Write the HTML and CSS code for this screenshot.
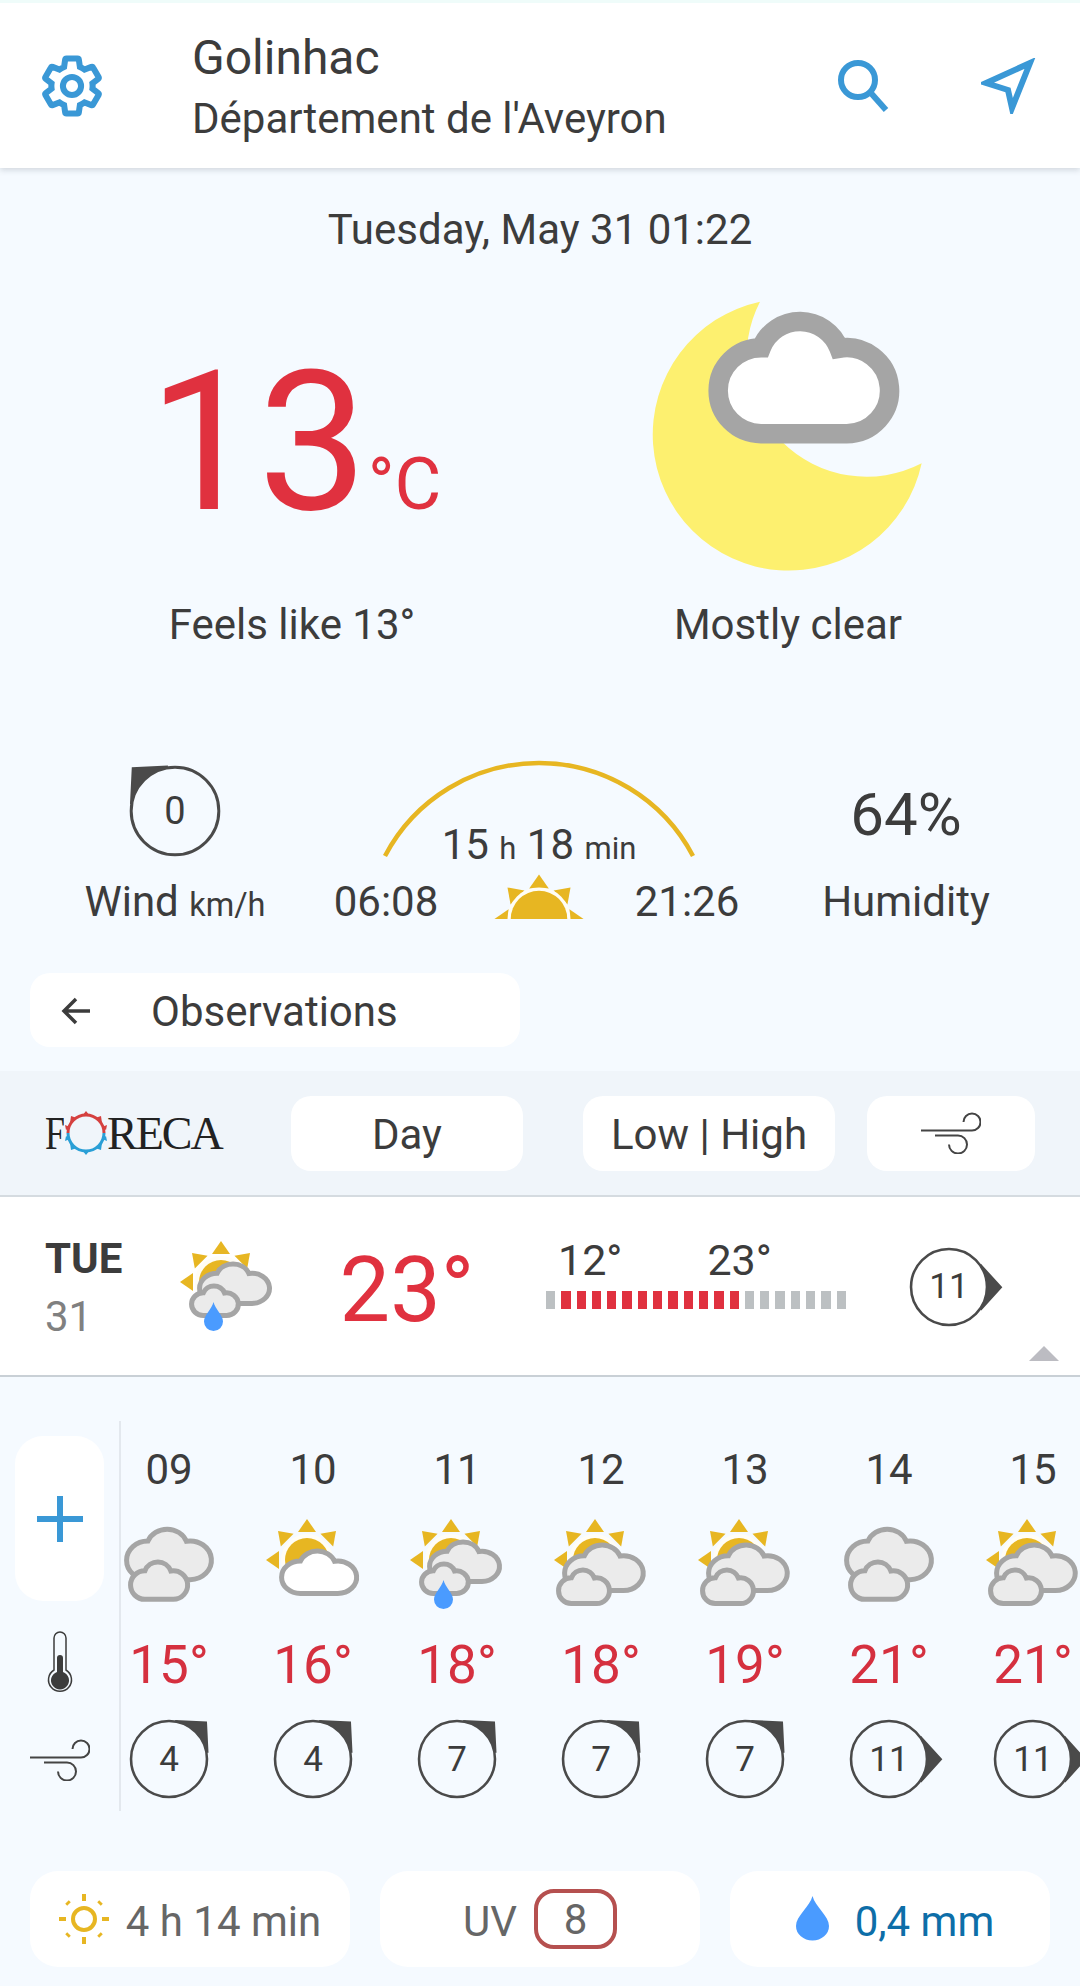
FILE: index.html
```html
<!DOCTYPE html>
<html lang="en">
<head>
    <meta charset="UTF-8">
    <meta name="viewport" content="width=device-width, initial-scale=1.0">
    <title>Golinhac weather</title>
    <link rel="stylesheet" href="styles.css">
</head>
<body>
    <!-- shared shapes for the weather icons and wind gauges -->
    <svg class="defs" aria-hidden="true">
        <defs>
            <path id="cloud" d="M129 341A129 129 0 0 1 130 83A125 125 0 0 1 363 85A129 129 0 1 1 386 341Z"/>
            <path id="drop" d="M9.5 0C11 7 19 13 19 19.5a9.5 9.5 0 0 1-19 0C0 13 8 7 9.5 0Z"/>
            <path id="ray" d="M-9-28H9L0-41Z"/>
            <g id="sun">
                <g class="sun-rays">
                    <use href="#ray" transform="translate(44 46) rotate(-90)"/>
                    <use href="#ray" transform="translate(44 46) rotate(-45)"/>
                    <use href="#ray" transform="translate(44 46)"/>
                    <use href="#ray" transform="translate(44 46) rotate(45)"/>
                </g>
                <circle class="sun-halo" cx="44" cy="46" r="26"/>
                <circle class="sun-core" cx="44" cy="46" r="22"/>
            </g>
            <g id="icon-cloudy">
                <use class="cloud-grey" href="#cloud" transform="translate(7.5 14.5) scale(.165 .15)"/>
                <use class="cloud-grey" href="#cloud" transform="translate(11.5 47.5) scale(.111)"/>
            </g>
            <g id="icon-sun-cloud">
                <use href="#sun"/>
                <use class="cloud-white" href="#cloud" transform="translate(18.5 36.5) scale(.146 .126)"/>
            </g>
            <g id="icon-sun-clouds">
                <use href="#sun"/>
                <use class="cloud-grey" href="#cloud" transform="translate(13.5 30.5) scale(.153 .135)"/>
                <use class="cloud-grey" href="#cloud" transform="translate(7.5 55.5) scale(.099 .1)"/>
            </g>
            <g id="icon-sun-rain">
                <use href="#sun"/>
                <use class="cloud-grey" href="#cloud" transform="translate(22.5 27.5) scale(.136 .117)"/>
                <use class="cloud-grey" href="#cloud" transform="translate(14.5 49.5) scale(.091 .088)"/>
                <use class="drop" href="#drop" transform="translate(27 66)"/>
            </g>
            <g id="gauge-ring">
                <path class="gauge-pointer" d="M6-38L37-36.5L38.5-6L36-6A36.500 36.500 0 0 0 6-36Z"/>
                <circle class="gauge-circle" r="37"/>
            </g>
            <g id="wind-lines">
                <path d="M0 18.500H51a8.500 8.500 0 1 0-8.500-8.500"/>
                <path d="M14 23.500H37a9 9 0 1 1-9 9"/>
            </g>
        </defs>
    </svg>

    <div class="page">
        <header class="topbar">
            <svg class="gear" viewBox="0 0 24 24">
                <path d="M19.430 12.980c.04-.32.07-.64.07-.98s-.03-.66-.07-.98l2.110-1.650c.19-.15.24-.42.12-.64l-2-3.460c-.12-.22-.39-.3-.61-.22l-2.490 1c-.52-.4-1.080-.73-1.690-.98l-.38-2.650C14.460 2.180 14.250 2 14 2h-4c-.25 0-.46.18-.49.42l-.38 2.650c-.61.25-1.170.59-1.690.98l-2.490-1c-.23-.09-.49 0-.61.22l-2 3.460c-.13.22-.07.49.12.64l2.110 1.650c-.04.32-.07.65-.07.98s.03.66.07.98l-2.110 1.650c-.19.15-.24.42-.12.64l2 3.460c.12.22.39.3.61.22l2.490-1c.52.4 1.080.73 1.690.98l.38 2.650c.03.24.24.42.49.42h4c.25 0 .46-.18.49-.42l.38-2.650c.61-.25 1.170-.59 1.690-.98l2.490 1c.23.09.49 0 .61-.22l2-3.460c.12-.22.07-.49-.12-.64l-2.110-1.650z"/>
                <circle cx="12" cy="12" r="3.300"/>
            </svg>
            <div class="place">
                <div class="place-name">Golinhac</div>
                <div class="place-region">Département de l'Aveyron</div>
            </div>
            <svg class="search" viewBox="0 0 54 54">
                <circle cx="22" cy="21" r="17"/>
                <path d="M34 33L50 51"/>
            </svg>
            <svg class="locate" viewBox="0 0 56 56">
                <path d="M49 5L5 25L27 32L31 50Z"/>
            </svg>
        </header>

        <div class="date">Tuesday, May 31 01:22</div>

        <section class="now">
            <div class="now-col">
                <div class="temp-big">13<span class="temp-unit">°C</span></div>
                <div class="now-label">Feels like 13°</div>
            </div>
            <div class="now-col">
                <svg class="moon" viewBox="0 0 1080 960">
                    <path class="moon-body" d="M480 65A408 408 0 1 0 965 550A360 360 0 0 1 480 65Z"/>
                    <use class="moon-cloud" href="#cloud" transform="translate(354 120)"/>
                </svg>
                <div class="now-label">Mostly clear</div>
            </div>
        </section>

        <section class="stats">
            <div class="stat-wind">
                <div class="gauge gauge-large gauge-nw">
                    <svg viewBox="-38 -38 76 76"><use href="#gauge-ring"/></svg>
                    <span>0</span>
                </div>
                <div class="stat-label">Wind <small>km/h</small></div>
            </div>
            <div class="stat-sun">
                <div class="daylight">
                    <svg class="arc" viewBox="0 0 320 96">
                        <path d="M6 96A174 174 0 0 1 314 96"/>
                    </svg>
                    <div class="daylight-text">15 <small>h</small> 18 <small>min</small></div>
                </div>
                <div class="sun-times">
                    <span>06:08</span>
                    <svg class="sunrise" viewBox="-46 -42.300 92 42.300">
                        <g class="sun-rays">
                            <use href="#ray" transform="rotate(-90)"/>
                            <use href="#ray" transform="rotate(-45)"/>
                            <use href="#ray"/>
                            <use href="#ray" transform="rotate(45)"/>
                            <use href="#ray" transform="rotate(90)"/>
                        </g>
                        <circle class="sun-halo" r="29"/>
                        <circle class="sun-core" r="26"/>
                    </svg>
                    <span>21:26</span>
                </div>
            </div>
            <div class="stat-humidity">
                <div class="humidity-value">64%</div>
                <div class="stat-label">Humidity</div>
            </div>
        </section>

        <button class="obs-button">
            <svg class="arrow" viewBox="0 0 30 28">
                <path d="M29 14H3M15 2L3 14L15 26"/>
            </svg>
            Observations
        </button>

        <nav class="toolbar">
            <div class="logo">
                <span class="logo-f">F</span>
                <svg class="logo-ring" viewBox="-24 -24 48 48">
                    <path class="ring-top" d="M-18 0A18 18 0 0 1 18 0"/>
                    <path class="ring-bottom" d="M18 0A18 18 0 0 1-18 0"/>
                    <path class="ring-points-top" d="M-4-17L0-22L4-17ZM-16-10L-15-17L-9-15ZM16-10L15-17L9-15ZM-20-3L-21-8L-16-6ZM20-3L21-8L16-6Z"/>
                    <path class="ring-points-bottom" d="M-4 17L0 22L4 17ZM-16 10L-15 17L-9 15ZM16 10L15 17L9 15ZM-20 3L-21 8L-16 6ZM20 3L21 8L16 6Z"/>
                </svg>
                <span>RECA</span>
            </div>
            <button class="tool-button tool-day">Day</button>
            <button class="tool-button tool-range">Low | High</button>
            <button class="tool-button tool-wind">
                <svg class="wind-icon" viewBox="0 0 60 42"><use href="#wind-lines"/></svg>
            </button>
        </nav>

        <section class="day-row">
            <div class="day-name">
                <div class="day-week">TUE</div>
                <div class="day-num">31</div>
            </div>
            <svg class="wx-icon" viewBox="0 0 100 100"><use href="#icon-sun-rain"/></svg>
            <div class="day-temp">23°</div>
            <div class="range">
                <div class="range-labels"><span>12°</span><span>23°</span></div>
                <div class="range-bar">
                    <i></i>
                    <i class="on"></i><i class="on"></i><i class="on"></i><i class="on"></i>
                    <i class="on"></i><i class="on"></i><i class="on"></i><i class="on"></i>
                    <i class="on"></i><i class="on"></i><i class="on"></i><i class="on"></i>
                    <i></i><i></i><i></i><i></i><i></i><i></i><i></i>
                </div>
            </div>
            <div class="gauge gauge-e">
                <svg viewBox="-38 -38 76 76"><use href="#gauge-ring"/></svg>
                <span>11</span>
            </div>
            <div class="caret"></div>
        </section>

        <section class="hourly">
            <div class="hourly-side">
                <button class="plus-button">
                    <svg class="plus" viewBox="0 0 46 46"><path d="M23 0V46M0 23H46"/></svg>
                </button>
                <svg class="thermo" viewBox="0 0 26 62">
                    <path class="thermo-shell" d="M7 39V7a6 6 0 0 1 12 0V39a11.500 11.500 0 1 1-12 0Z"/>
                    <path class="thermo-fill" d="M10 27a3 3 0 0 1 6 0V41a9 9 0 1 1-6 0Z"/>
                </svg>
                <svg class="wind-icon wind-side" viewBox="0 0 60 42"><use href="#wind-lines"/></svg>
            </div>
            <div class="hours">
                <div class="hour">
                    <div class="hour-time">09</div>
                    <svg class="wx-icon" viewBox="0 0 100 100"><use href="#icon-cloudy"/></svg>
                    <div class="hour-temp">15°</div>
                    <div class="gauge"><svg viewBox="-38 -38 76 76"><use href="#gauge-ring"/></svg><span>4</span></div>
                </div>
                <div class="hour">
                    <div class="hour-time">10</div>
                    <svg class="wx-icon" viewBox="0 0 100 100"><use href="#icon-sun-cloud"/></svg>
                    <div class="hour-temp">16°</div>
                    <div class="gauge"><svg viewBox="-38 -38 76 76"><use href="#gauge-ring"/></svg><span>4</span></div>
                </div>
                <div class="hour">
                    <div class="hour-time">11</div>
                    <svg class="wx-icon" viewBox="0 0 100 100"><use href="#icon-sun-rain"/></svg>
                    <div class="hour-temp">18°</div>
                    <div class="gauge"><svg viewBox="-38 -38 76 76"><use href="#gauge-ring"/></svg><span>7</span></div>
                </div>
                <div class="hour">
                    <div class="hour-time">12</div>
                    <svg class="wx-icon" viewBox="0 0 100 100"><use href="#icon-sun-clouds"/></svg>
                    <div class="hour-temp">18°</div>
                    <div class="gauge"><svg viewBox="-38 -38 76 76"><use href="#gauge-ring"/></svg><span>7</span></div>
                </div>
                <div class="hour">
                    <div class="hour-time">13</div>
                    <svg class="wx-icon" viewBox="0 0 100 100"><use href="#icon-sun-clouds"/></svg>
                    <div class="hour-temp">19°</div>
                    <div class="gauge"><svg viewBox="-38 -38 76 76"><use href="#gauge-ring"/></svg><span>7</span></div>
                </div>
                <div class="hour">
                    <div class="hour-time">14</div>
                    <svg class="wx-icon" viewBox="0 0 100 100"><use href="#icon-cloudy"/></svg>
                    <div class="hour-temp">21°</div>
                    <div class="gauge gauge-e"><svg viewBox="-38 -38 76 76"><use href="#gauge-ring"/></svg><span>11</span></div>
                </div>
                <div class="hour">
                    <div class="hour-time">15</div>
                    <svg class="wx-icon" viewBox="0 0 100 100"><use href="#icon-sun-clouds"/></svg>
                    <div class="hour-temp">21°</div>
                    <div class="gauge gauge-e"><svg viewBox="-38 -38 76 76"><use href="#gauge-ring"/></svg><span>11</span></div>
                </div>
            </div>
        </section>

        <section class="pills">
            <div class="pill">
                <svg class="pill-sun" viewBox="-25 -25 50 50">
                    <circle r="11"/>
                    <path d="M0-25V-18M0 18V25M-25 0H-18M18 0H25"/>
                    <path class="pill-sun-diag" d="M-17-17L-15-15M15-15L17-17M-17 17L-15 15M15 15L17 17"/>
                </svg>
                4 h 14 min
            </div>
            <div class="pill">
                UV <span class="uv-badge">8</span>
            </div>
            <div class="pill pill-rain">
                <svg class="pill-drop" viewBox="0 0 19 30" preserveAspectRatio="none"><use href="#drop"/></svg>
                0,4 mm
            </div>
        </section>
    </div>
</body>
</html>
```

FILE: styles.css
```css
body {
    margin: 0;
    font-family: Roboto, "Liberation Sans", sans-serif;
    color: #3c3c3c;
    background-color: #f5faff;
}
button {
    font: inherit;
    color: inherit;
    border: none;
    background-color: #fff;
    padding: 0;
}
svg {
    display: block;
}
.defs {
    width: 0;
    height: 0;
}
.page {
    width: 1080px;
    height: 1986px;
    overflow: hidden;
}

/* header */
.topbar {
    box-sizing: border-box;
    height: 168px;
    display: flex;
    align-items: center;
    background-color: #fff;
    border-top: 3px solid #effcfa;
    box-shadow: 0 2px 6px rgba(60, 70, 80, 0.2);
}
.gear {
    width: 66px;
    height: 66px;
    margin-left: 39px;
    fill: none;
    stroke: #3a98d6;
    stroke-width: 2.200;
}
.place {
    margin-left: 87px;
    margin-top: 5px;
    flex: 1;
}
.place-name {
    font-size: 48px;
    line-height: 61px;
}
.place-region {
    font-size: 42px;
    line-height: 61px;
}
.search {
    width: 54px;
    height: 54px;
    margin-right: 91px;
    fill: none;
    stroke: #3a98d6;
    stroke-width: 6;
}
.locate {
    width: 56px;
    height: 56px;
    margin-right: 43px;
    fill: none;
    stroke: #3a98d6;
    stroke-width: 6;
}

/* current conditions */
.date {
    margin-top: 39px;
    text-align: center;
    font-size: 42px;
    line-height: 46px;
}
.now {
    display: grid;
    grid-template-columns: 584px 408px;
    margin-top: 27px;
}
.now-col {
    display: flex;
    flex-direction: column;
    align-items: center;
}
.temp-big {
    box-sizing: border-box;
    height: 320px;
    padding-top: 13px;
    display: flex;
    align-items: baseline;
    font-size: 195px;
    line-height: 300px;
    color: #e0313f;
    margin-left: 6px;
}
.temp-unit {
    font-size: 72px;
}
.moon {
    width: 360px;
    height: 320px;
    margin-right: 16px;
}
.moon-body {
    fill: #fdf06f;
}
.moon-cloud {
    fill: #fff;
    stroke: #a5a5a5;
    stroke-width: 19.500;
}
.now-label {
    margin-top: 2px;
    font-size: 42px;
    line-height: 46px;
}

/* wind, daylight, humidity */
.stats {
    display: grid;
    grid-template-columns: 300px 478px 302px;
    margin-top: 112px;
}
.stat-wind {
    display: flex;
    flex-direction: column;
    align-items: center;
    padding-left: 50px;
}
.stat-wind .gauge {
    margin-top: 6px;
    margin-bottom: 23px;
}
.stat-label {
    font-size: 42px;
    line-height: 46px;
    white-space: nowrap;
}
small {
    font-size: 32.500px;
    line-height: 1;
}
.daylight {
    display: grid;
    justify-items: center;
    height: 119px;
}
.arc, .daylight-text {
    grid-area: 1 / 1;
}
.arc {
    width: 320px;
    height: 96px;
    overflow: visible;
    fill: none;
    stroke: #e7b622;
    stroke-width: 4.500;
}
.daylight-text {
    margin-top: 65px;
    font-size: 42px;
    line-height: 40px;
}
.daylight-text small {
    font-size: 31px;
}
.sun-times {
    display: grid;
    grid-template-columns: 172px 134px 162px;
    justify-items: center;
    font-size: 42px;
    line-height: 46px;
}
.sunrise {
    width: 100px;
    height: 46px;
    margin-top: -6px;
}
.sun-rays use {
    fill: #e7b622;
}
.sun-halo {
    fill: #fffdf5;
}
.sun-core {
    fill: #e7b622;
}
.stat-humidity {
    display: flex;
    flex-direction: column;
    align-items: center;
    padding-right: 46px;
}
.humidity-value {
    margin-top: 22px;
    margin-bottom: 31px;
    font-size: 60px;
    line-height: 66px;
}

.obs-button {
    display: flex;
    align-items: center;
    box-sizing: border-box;
    width: 490px;
    height: 74px;
    margin: 48px 0 0 30px;
    padding-left: 31px;
    padding-top: 2px;
    border-radius: 20px;
    font-size: 42px;
}
.arrow {
    width: 30px;
    height: 28px;
    margin-right: 60px;
    fill: none;
    stroke: #3c3c3c;
    stroke-width: 3.500;
}

/* toolbar */
.toolbar {
    box-sizing: border-box;
    height: 126px;
    margin-top: 24px;
    display: flex;
    align-items: center;
    background-color: #f0f5fa;
    border-bottom: 2px solid #d5dbe0;
}
.logo {
    display: flex;
    align-items: center;
    width: 246px;
    margin-left: 45px;
    font-family: "Liberation Serif", serif;
    font-size: 46px;
    letter-spacing: -2px;
    color: #222;
}
.logo-f {
    transform: scaleX(0.78);
    transform-origin: left;
}
.logo-ring {
    width: 48px;
    height: 48px;
    margin: 0 -2.500px 0 -7px;
    fill: none;
    stroke-width: 3;
}
.ring-top {
    stroke: #d5403f;
}
.ring-bottom {
    stroke: #2a9fd6;
}
.ring-points-top {
    fill: #d5403f;
}
.ring-points-bottom {
    fill: #2a9fd6;
}
.tool-button {
    height: 75px;
    padding-top: 2px;
    border-radius: 20px;
    font-size: 42px;
}
.tool-day {
    width: 232px;
    margin-left: 0;
}
.tool-range {
    width: 252px;
    margin-left: 60px;
}
.tool-wind {
    width: 168px;
    margin-left: 32px;
    padding-top: 0;
    display: flex;
    justify-content: center;
    align-items: center;
}
.wind-icon {
    width: 60px;
    height: 42px;
    fill: none;
    stroke: #444;
    stroke-width: 2;
}

/* day row */
.day-row {
    position: relative;
    box-sizing: border-box;
    height: 180px;
    display: flex;
    align-items: center;
    padding-bottom: 1px;
    padding-left: 45px;
    background-color: #fff;
    border-bottom: 2px solid #c9d0d6;
}
.day-name {
    width: 132px;
    margin-top: 4px;
}
.day-week {
    font-size: 42px;
    font-weight: 700;
    line-height: 58px;
}
.day-num {
    font-size: 42px;
    line-height: 58px;
    color: #808080;
}
.wx-icon {
    width: 100px;
    height: 100px;
    flex: none;
    overflow: visible;
}
#cloud {
    vector-effect: non-scaling-stroke;
}
.cloud-grey {
    fill: #ebebeb;
    stroke: #a5a5a5;
    stroke-width: 5;
}
.cloud-white {
    fill: #fff;
    stroke: #a5a5a5;
    stroke-width: 5;
}
.drop {
    fill: #4a9bff;
}
.day-temp {
    width: 170px;
    margin-left: 45px;
    margin-top: 10px;
    text-align: center;
    font-size: 90px;
    line-height: 100px;
    color: #e0313f;
}
.range {
    width: 304px;
    margin-left: 54px;
    margin-top: -27px;
}
.range-labels {
    display: flex;
    gap: 85px;
    padding-left: 12px;
    font-size: 43px;
    line-height: 48px;
}
.range-bar {
    display: flex;
    gap: 6px;
    margin-top: 7px;
}
.range-bar i {
    width: 9.300px;
    height: 18px;
    background-color: #bcc0c2;
}
.range-bar i.on {
    background-color: #e0313f;
}
.day-row .gauge {
    margin-left: 60px;
    margin-top: 2px;
}
.caret {
    position: absolute;
    left: 1029px;
    bottom: 14px;
    border-left: 15px solid transparent;
    border-right: 15px solid transparent;
    border-bottom: 15px solid #bcbcc2;
}

/* wind gauge, the ring turns to show the direction */
.gauge {
    display: grid;
    place-items: center;
    flex: none;
    width: 78px;
    height: 78px;
    font-size: 35px;
}
.gauge svg, .gauge span {
    grid-area: 1 / 1;
}
.gauge svg {
    width: 100%;
    height: 100%;
    overflow: visible;
}
.gauge-e svg {
    transform: rotate(45deg);
}
.gauge-nw svg {
    transform: rotate(-90deg);
}
.gauge-large {
    width: 90px;
    height: 90px;
    font-size: 38px;
}
.gauge-pointer {
    fill: #4a4a4a;
}
.gauge-circle {
    fill: none;
    stroke: #4a4a4a;
    stroke-width: 2.500;
}

/* hourly forecast */
.hourly {
    display: flex;
    margin-top: 44px;
}
.hourly-side {
    box-sizing: border-box;
    flex: none;
    width: 121px;
    height: 390px;
    display: flex;
    flex-direction: column;
    align-items: center;
    border-right: 2px solid #e3e8ee;
}
.plus-button {
    display: flex;
    align-items: center;
    justify-content: center;
    width: 89px;
    height: 165px;
    margin-top: 15px;
    border-radius: 28px;
}
.plus {
    width: 46px;
    height: 46px;
    fill: none;
    stroke: #3a98d6;
    stroke-width: 6;
}
.thermo {
    width: 26px;
    height: 62px;
    margin-top: 30px;
}
.thermo-shell {
    fill: none;
    stroke: #3c3c3c;
    stroke-width: 1.500;
}
.thermo-fill {
    fill: #3c3c3c;
}
.wind-side {
    margin-top: 46px;
}
.hours {
    display: flex;
    gap: 48px;
}
.hour {
    width: 96px;
    flex: none;
    display: flex;
    flex-direction: column;
    align-items: center;
    padding-top: 26px;
}
.hour-time {
    font-size: 42px;
    line-height: 46px;
}
.hour .wx-icon {
    margin-top: 21px;
}
.hour-temp {
    margin-top: 21px;
    font-size: 53px;
    line-height: 60px;
    color: #d5303f;
}
.hour .gauge {
    margin-top: 25px;
}

/* bottom summary */
.pills {
    display: grid;
    grid-template-columns: repeat(3, 1fr);
    gap: 30px;
    margin-top: 60px;
    padding: 0 30px;
}
.pill {
    box-sizing: border-box;
    height: 96px;
    display: flex;
    align-items: center;
    justify-content: center;
    gap: 17px;
    padding-top: 4px;
    border-radius: 28px;
    background-color: #fff;
    font-size: 42px;
    color: #666;
}
.pill svg, .uv-badge {
    margin-top: -4px;
}
.pill-sun {
    width: 50px;
    height: 50px;
    fill: none;
    stroke: #e7b622;
    stroke-width: 4;
}
.pill-sun-diag {
    stroke-width: 5;
}
.uv-badge {
    box-sizing: border-box;
    width: 83px;
    height: 60px;
    display: flex;
    align-items: center;
    justify-content: center;
    border: 4px solid #b5504f;
    border-radius: 20px;
}
.pill-drop {
    width: 33px;
    height: 46px;
    fill: #4a9bff;
}
.pill-rain {
    color: #0d6ea8;
    gap: 26px;
    padding-left: 10px;
}
```
